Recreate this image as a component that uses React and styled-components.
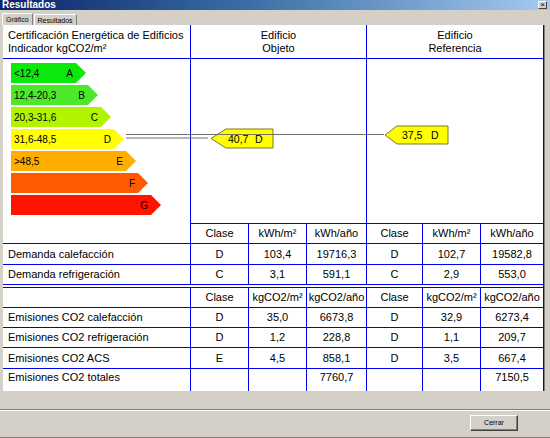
import React from "react";
import styled, { createGlobalStyle } from "styled-components";

const Global = createGlobalStyle`
  html, body { margin: 0; padding: 0; background: #d4d0c8; }
  * { box-sizing: border-box; }
`;

const bars = [
  { range: "<12,4", letter: "A", color: "#0be80b", w: 75 },
  { range: "12,4-20,3", letter: "B", color: "#4ee82a", w: 87 },
  { range: "20,3-31,6", letter: "C", color: "#b2f400", w: 100 },
  { range: "31,6-48,5", letter: "D", color: "#ffff00", w: 113 },
  { range: ">48,5", letter: "E", color: "#ffae00", w: 125 },
  { range: "", letter: "F", color: "#ff5a00", w: 137 },
  { range: "", letter: "G", color: "#ff1400", w: 150 },
];

const demanda = [
  ["Demanda calefacción", "D", "103,4", "19716,3", "D", "102,7", "19582,8"],
  ["Demanda refrigeración", "C", "3,1", "591,1", "C", "2,9", "553,0"],
];

const emisiones = [
  ["Emisiones CO2 calefacción", "D", "35,0", "6673,8", "D", "32,9", "6273,4"],
  ["Emisiones CO2 refrigeración", "D", "1,2", "228,8", "D", "1,1", "209,7"],
  ["Emisiones CO2 ACS", "E", "4,5", "858,1", "D", "3,5", "667,4"],
];

const App = () => {
  return (
    <Window>
      <Global />
      <TitleBar>
        <Title>Resultados</Title>
        <CloseBtn>×</CloseBtn>
      </TitleBar>
      <TabStrip>
        <Tab $active>Gráfico</Tab>
        <Tab>Resultados</Tab>
      </TabStrip>
      <Panel>
        <Grid>
          <Cell $left>
            Certificación Energética de Edificios
            <br />
            Indicador kgCO2/m²
          </Cell>
          <Cell $span={3}>
            Edificio
            <br />
            Objeto
          </Cell>
          <Cell $span={3}>
            Edificio
            <br />
            Referencia
          </Cell>

          <ChartCell>
            {bars.map((b) => (
              <Bar key={b.letter} $color={b.color} style={{ width: b.w }}>
                <span>{b.range}</span>
                <span>{b.letter}</span>
              </Bar>
            ))}
          </ChartCell>
          <Cell $span={3} />
          <Cell $span={3} />

          {["Clase", "kWh/m²", "kWh/año", "Clase", "kWh/m²", "kWh/año"].map(
            (h, i) => (
              <Cell key={"h1" + i}>{h}</Cell>
            )
          )}
          {demanda.map((row) =>
            row.map((v, i) => (
              <Cell key={row[0] + i} $left={i === 0}>
                {v}
              </Cell>
            ))
          )}

          <Spacer />

          <Cell />
          {["Clase", "kgCO2/m²", "kgCO2/año", "Clase", "kgCO2/m²", "kgCO2/año"].map(
            (h, i) => (
              <Cell key={"h2" + i}>{h}</Cell>
            )
          )}
          {emisiones.map((row) =>
            row.map((v, i) => (
              <Cell key={row[0] + i} $left={i === 0}>
                {v}
              </Cell>
            ))
          )}
          {["Emisiones CO2 totales", "", "", "7760,7", "", "", "7150,5"].map(
            (v, i) => (
              <Cell key={"t" + i} $left={i === 0} $top>
                {v}
              </Cell>
            )
          )}
        </Grid>

        <Overlay viewBox="3 25 541 220" width="541" height="220">
          <line x1="126" y1="138" x2="208" y2="138" stroke="#707070" />
          <polygon
            points="211,138.5 226,129 273,129 273,148 226,148"
            fill="#ffff00"
            stroke="#7a7a20"
          />
          <MarkText x="228" y="142.5">40,7</MarkText>
          <MarkText x="255" y="142.5">D</MarkText>
          <line x1="126" y1="134.5" x2="384" y2="134.5" stroke="#707070" />
          <polygon
            points="385,135 397,126 448,126 448,144 397,144"
            fill="#ffff00"
            stroke="#7a7a20"
          />
          <MarkText x="402" y="139">37,5</MarkText>
          <MarkText x="431" y="139">D</MarkText>
        </Overlay>
      </Panel>
      <Footer>
        <Separator />
        <ButtonRow>
          <Button>Cerrar</Button>
        </ButtonRow>
      </Footer>
    </Window>
  );
};

export default App;

const Window = styled.div`
  width: 550px;
  height: 438px;
  display: flex;
  flex-direction: column;
  background: #d4d0c8;
  font-family: "Liberation Sans", Arial, sans-serif;
  border-bottom: 1px solid #808080;
  overflow: hidden;
`;

const TitleBar = styled.div`
  height: 10px;
  display: flex;
  align-items: center;
  justify-content: space-between;
  padding: 0 3px 0 2px;
  background: linear-gradient(to right, #0a246a, #3a6ea5 45%, #a6caf0);
`;

const Title = styled.div`
  color: #fff;
  font-weight: bold;
  font-size: 10px;
  line-height: 10px;
`;

const CloseBtn = styled.div`
  width: 9px;
  height: 8px;
  background: #d4d0c8;
  border: 1px solid;
  border-color: #fff #404040 #404040 #fff;
  font-size: 8px;
  line-height: 5px;
  text-align: center;
  color: #000;
`;

const TabStrip = styled.div`
  height: 15px;
  display: flex;
  align-items: flex-end;
  padding-left: 2px;
`;

const Tab = styled.div`
  height: ${(p) => (p.$active ? "12px" : "11px")};
  padding: 1px 3px 0;
  margin-right: 1px;
  font-size: 7px;
  line-height: 9px;
  color: #000;
  border: 1px solid;
  border-bottom: none;
  border-color: #fff #808080 #808080 #fff;
  background: #d4d0c8;
`;

const Panel = styled.div`
  position: relative;
  margin-left: 3px;
  width: 542px;
  height: 366px;
  background: #fff;
  border-right: 1px solid #808080;
`;

const Grid = styled.div`
  display: grid;
  width: 541px;
  height: 366px;
  grid-template-columns: 187px 57px 57px 59px 55px 57px 62px;
  grid-template-rows: 33px 164px 19px 20px 19px 2px 19px 19px 19px 20px 22px;
  gap: 1px;
  background: #0000f0;
  font-size: 11px;
  color: #000;
`;

const Cell = styled.div`
  grid-column: span ${(p) => p.$span || 1};
  background: #fff;
  display: flex;
  align-items: ${(p) => (p.$top ? "flex-start" : "center")};
  justify-content: ${(p) => (p.$left ? "flex-start" : "center")};
  text-align: ${(p) => (p.$left ? "left" : "center")};
  padding: ${(p) => (p.$top ? "2px" : "0")} 0 0 ${(p) => (p.$left ? "5px" : "0")};
  line-height: 13px;
  white-space: nowrap;
`;

const ChartCell = styled.div`
  grid-row: span 2;
  background: #fff;
  display: flex;
  flex-direction: column;
  gap: 2px;
  padding: 4px 0 0 8px;
`;

const Bar = styled.div`
  height: 20px;
  background: ${(p) => p.$color};
  clip-path: polygon(0 0, calc(100% - 10px) 0, 100% 50%, calc(100% - 10px) 100%, 0 100%);
  display: flex;
  align-items: center;
  justify-content: space-between;
  padding: 0 13px 0 3px;
  font-size: 10px;
  color: #000;
`;

const Spacer = styled.div`
  grid-column: 1 / -1;
  background: #fff;
`;

const Overlay = styled.svg`
  position: absolute;
  top: 0;
  left: 0;
  pointer-events: none;
`;

const MarkText = styled.text`
  font-family: "Liberation Sans", Arial, sans-serif;
  font-size: 10.5px;
  fill: #000;
`;

const Footer = styled.div`
  flex: 1;
  display: flex;
  flex-direction: column;
  padding-top: 18px;
`;

const Separator = styled.div`
  border-top: 1px solid #808080;
  border-bottom: 1px solid #fff;
`;

const ButtonRow = styled.div`
  display: flex;
  justify-content: flex-end;
  padding: 4px 32px 0 0;
`;

const Button = styled.div`
  width: 48px;
  height: 16px;
  background: #d4d0c8;
  border: 1px solid;
  border-color: #fff #404040 #404040 #fff;
  box-shadow: inset -1px -1px 0 #808080;
  font-size: 7px;
  line-height: 14px;
  text-align: center;
  color: #000;
`;
